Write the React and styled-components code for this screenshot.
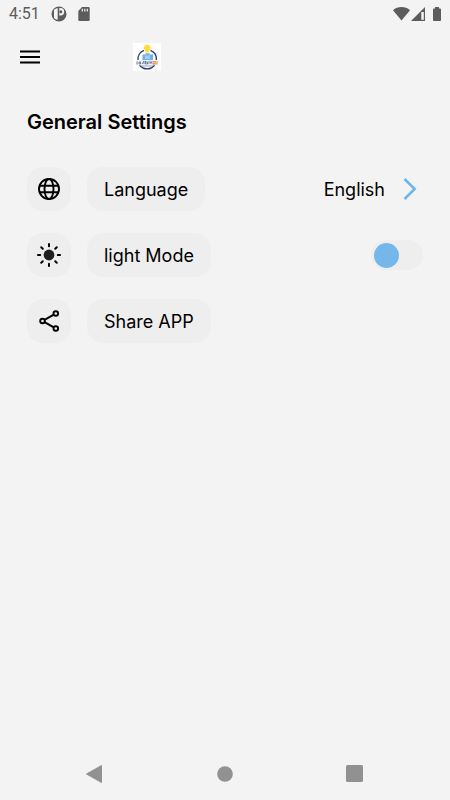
import React, { useState } from "react";
import styled, { createGlobalStyle } from "styled-components";

const GlobalStyle = createGlobalStyle`
  * { box-sizing: border-box; }
  body { margin: 0; background: #f3f3f3; }
  button, input { font: inherit; color: inherit; }
  svg { display: block; flex: none; }
`;

const Screen = styled.div`
  min-height: 100vh;
  display: flex;
  flex-direction: column;
  background: #f3f3f3;
  color: #000;
  font-family: Inter, "Open Sans", sans-serif;
`;

const StatusBar = styled.div`
  display: flex;
  align-items: center;
  justify-content: space-between;
  height: 28px;
  padding: 0 8px 0 9px;
  color: #5c5c5c;
  font: 16px/28px Roboto, sans-serif;
`;

const StatusGroup = styled.div`
  display: flex;
  align-items: center;
  gap: 11px;
`;

const Header = styled.header`
  display: flex;
  align-items: center;
  gap: 89px;
  height: 58px;
  padding: 0 16px;
`;

const IconButton = styled.button`
  display: flex;
  padding: 0;
  border: 0;
  background: none;
  cursor: pointer;
`;

const Content = styled.main`
  flex: 1;
  padding: 22px 27px;
`;

const Title = styled.h1`
  margin: 0 0 31px;
  font-size: 20px;
  line-height: 28px;
  font-weight: 600;
`;

const SettingsList = styled.div`
  display: flex;
  flex-direction: column;
  gap: 22px;
`;

const SettingRow = styled.div`
  display: flex;
  align-items: center;
  min-height: 44px;
`;

const IconTile = styled.span`
  display: grid;
  place-items: center;
  width: 44px;
  height: 44px;
  margin-right: 16px;
  border-radius: 16px;
  background: #eee;
`;

const LabelPill = styled.label`
  height: 44px;
  padding: 2px 17px 0;
  border: 0;
  border-radius: 16px;
  background: #eee;
  font-size: 18px;
  line-height: 42px;
  white-space: nowrap;
  cursor: pointer;
`;

const LanguageValue = styled.button`
  display: flex;
  align-items: center;
  gap: 18px;
  margin-left: auto;
  padding: 0 6px 0 0;
  border: 0;
  background: none;
  font-size: 18px;
  line-height: 42px;
  cursor: pointer;
`;

const ValueText = styled.span`
  padding-top: 2px;
`;

const Switch = styled.input`
  appearance: none;
  display: flex;
  align-items: center;
  width: 52px;
  height: 30px;
  margin: 0 0 0 auto;
  padding: 0 3px;
  border-radius: 15px;
  background: #eee;
  cursor: pointer;

  &::before {
    content: "";
    width: 25px;
    height: 25px;
    border-radius: 50%;
    background: #76b7eb;
  }
  &:checked {
    justify-content: flex-end;
  }
`;

const NavBar = styled.nav`
  display: flex;
  align-items: center;
  justify-content: space-around;
  height: 53px;
  padding: 0 30px 0 29px;
`;

const sunRays = [0, 45, 90, 135, 180, 225, 270, 315];

function PIcon() {
  return (
    <svg width="16" height="16" viewBox="0 0 16 16">
      <circle cx="8" cy="8" r="7.5" fill="#5c5c5c" />
      <path d="M3 3.800Q4.500 2.400 6.700 2v11.800Q4.500 13.400 3 12z" fill="#f3f3f3" />
      <path d="M8.300 2h1.200a3.700 3.700 0 0 1 0 7.400H8.300z" fill="#f3f3f3" />
      <circle cx="9.800" cy="5.700" r="1.500" fill="#5c5c5c" />
    </svg>
  );
}

function SdIcon() {
  return (
    <svg width="12" height="14" viewBox="0 0 12 14">
      <path d="M4 0h6.500A1.200 1.200 0 0 1 11.700 1.200v11.500a1.200 1.200 0 0 1-1.200 1.300h-9A1.200 1.200 0 0 1 .3 12.700V4z" fill="#5c5c5c" />
      <path d="M4.300 1.700v2.800M6.800 1.700v2.800M9.300 1.700v2.800" stroke="#f3f3f3" strokeWidth="1.200" />
    </svg>
  );
}

function SystemIcons() {
  return (
    <svg width="49" height="14" viewBox="0 0 49 14" fill="#5c5c5c">
      <path d="M0 3.300C4.500-1 12.500-1 17 3.300L8.500 13.600z" />
      <path d="M32 0v14H18z" />
      <path d="M28.300 5h2.500v7.800h-2.500z" fill="#f3f3f3" />
      <path d="M42 0h4v1.500h1.200q.8 0 .8.800v10.900q0 .8-.8.800h-6.400q-.8 0-.8-.8V2.300q0-.8.8-.8H42z" />
    </svg>
  );
}

function MenuIcon() {
  return (
    <svg width="28" height="28" viewBox="0 0 28 28" stroke="#000" strokeWidth="2">
      <path d="M4 8.500h20M4 14h20M4 19.500h20" />
    </svg>
  );
}

function Logo() {
  return (
    <svg width="28" height="28" viewBox="0 0 28 28" role="img" aria-label="App logo">
      <rect width="28" height="28" fill="#fff" />
      <path d="M11 7.400A9.400 9.400 0 0 0 5 17M17.500 7.400A9.400 9.400 0 0 1 23.300 17M6.500 22a9.400 9.400 0 0 0 15.200 0" fill="none" stroke="#293c70" strokeWidth="1.300" />
      <path d="M9.500 11.500h3v-1.200h4v1.200H20v5.800H9.500z" fill="#72aee9" />
      <path d="M12 12.500h5v3.500h-5z" fill="#a5cdf2" />
      <path d="M12.600 9.500 12 7.200a3.200 3.200 0 1 1 4.400 0l-.7 2.300z" fill="#ffda3c" />
      <path d="M10.500 5H9M18 5h1.500M11.500 2.200l-1-1M17 2.200l1-1" stroke="#ffeb91" />
      <path d="M3 17.300h22v5H3z" fill="#edf1f5" />
      <path d="M4 18.500v3M6 21v-2h1.500v2zM9 21l2-3v3M12.500 18v3h2v-2h-2M16 18v3M18 18v3M17.200 19.500h1.600" fill="none" stroke="#596b86" strokeWidth=".8" />
      <path d="M19.500 18h3.200v3.500h-3.200zM23.500 18h1v3.500h-1z" fill="#f18a42" />
      <path d="M20.500 18.700h1.200v1.500h-1.200z" fill="#ffd0a4" />
      <path d="M8 23h12" stroke="#8290ae" strokeWidth=".8" />
    </svg>
  );
}

function GlobeIcon() {
  return (
    <svg width="24" height="24" viewBox="0 0 24 24" fill="none" stroke="#000" strokeWidth="1.900">
      <circle cx="12" cy="12" r="10" />
      <ellipse cx="12" cy="12" rx="4.500" ry="10" />
      <path d="M2.500 8.700h19M2.500 15.300h19" />
    </svg>
  );
}

function SunIcon() {
  return (
    <svg width="26" height="26" viewBox="0 0 26 26">
      <circle cx="13" cy="13" r="5.400" fill="#202020" />
      {sunRays.map((angle) => (
        <path key={angle} d="M13 2v2.200" stroke="#000" strokeWidth="2" strokeLinecap="round" transform={`rotate(${angle} 13 13)`} />
      ))}
    </svg>
  );
}

function ShareIcon() {
  return (
    <svg width="24" height="24" viewBox="0 0 24 24" fill="none" stroke="#000" strokeWidth="1.900">
      <circle cx="5.500" cy="12" r="2.300" />
      <circle cx="18.800" cy="4.500" r="2.300" />
      <circle cx="18.800" cy="19.500" r="2.300" />
      <path d="m7.500 10.900 9.300-5.300M7.500 13.100l9.300 5.300" />
    </svg>
  );
}

export default function App() {
  const [dark, setDark] = useState(false);
  return (
    <Screen>
      <GlobalStyle />
      <StatusBar>
        <StatusGroup>
          <span>4:51</span>
          <PIcon />
          <SdIcon />
        </StatusGroup>
        <SystemIcons />
      </StatusBar>
      <Header>
        <IconButton aria-label="Menu"><MenuIcon /></IconButton>
        <Logo />
      </Header>
      <Content>
        <Title>General Settings</Title>
        <SettingsList>
          <SettingRow>
            <IconTile><GlobeIcon /></IconTile>
            <LabelPill htmlFor="language">Language</LabelPill>
            <LanguageValue id="language">
              <ValueText>English</ValueText>
              <svg width="14" height="22" viewBox="0 0 14 22" fill="none" stroke="#6eb4ec" strokeWidth="2.500">
                <path d="m1.500 1 10.200 10L1.500 21" />
              </svg>
            </LanguageValue>
          </SettingRow>
          <SettingRow>
            <IconTile><SunIcon /></IconTile>
            <LabelPill htmlFor="mode">light Mode</LabelPill>
            <Switch id="mode" type="checkbox" role="switch" checked={dark} onChange={(e) => setDark(e.target.checked)} />
          </SettingRow>
          <SettingRow>
            <IconTile><ShareIcon /></IconTile>
            <LabelPill as="button">Share APP</LabelPill>
          </SettingRow>
        </SettingsList>
      </Content>
      <NavBar>
        <IconButton aria-label="Back">
          <svg width="18" height="18" viewBox="0 0 18 18"><path d="M15.500.5v17L.5 9z" fill="#919191" stroke="#919191" strokeLinejoin="round" /></svg>
        </IconButton>
        <IconButton aria-label="Home">
          <svg width="16" height="16" viewBox="0 0 16 16"><circle cx="8" cy="8" r="7.800" fill="#919191" /></svg>
        </IconButton>
        <IconButton aria-label="Recent apps">
          <svg width="17" height="17" viewBox="0 0 17 17"><rect width="17" height="17" rx="1.500" fill="#919191" /></svg>
        </IconButton>
      </NavBar>
    </Screen>
  );
}
